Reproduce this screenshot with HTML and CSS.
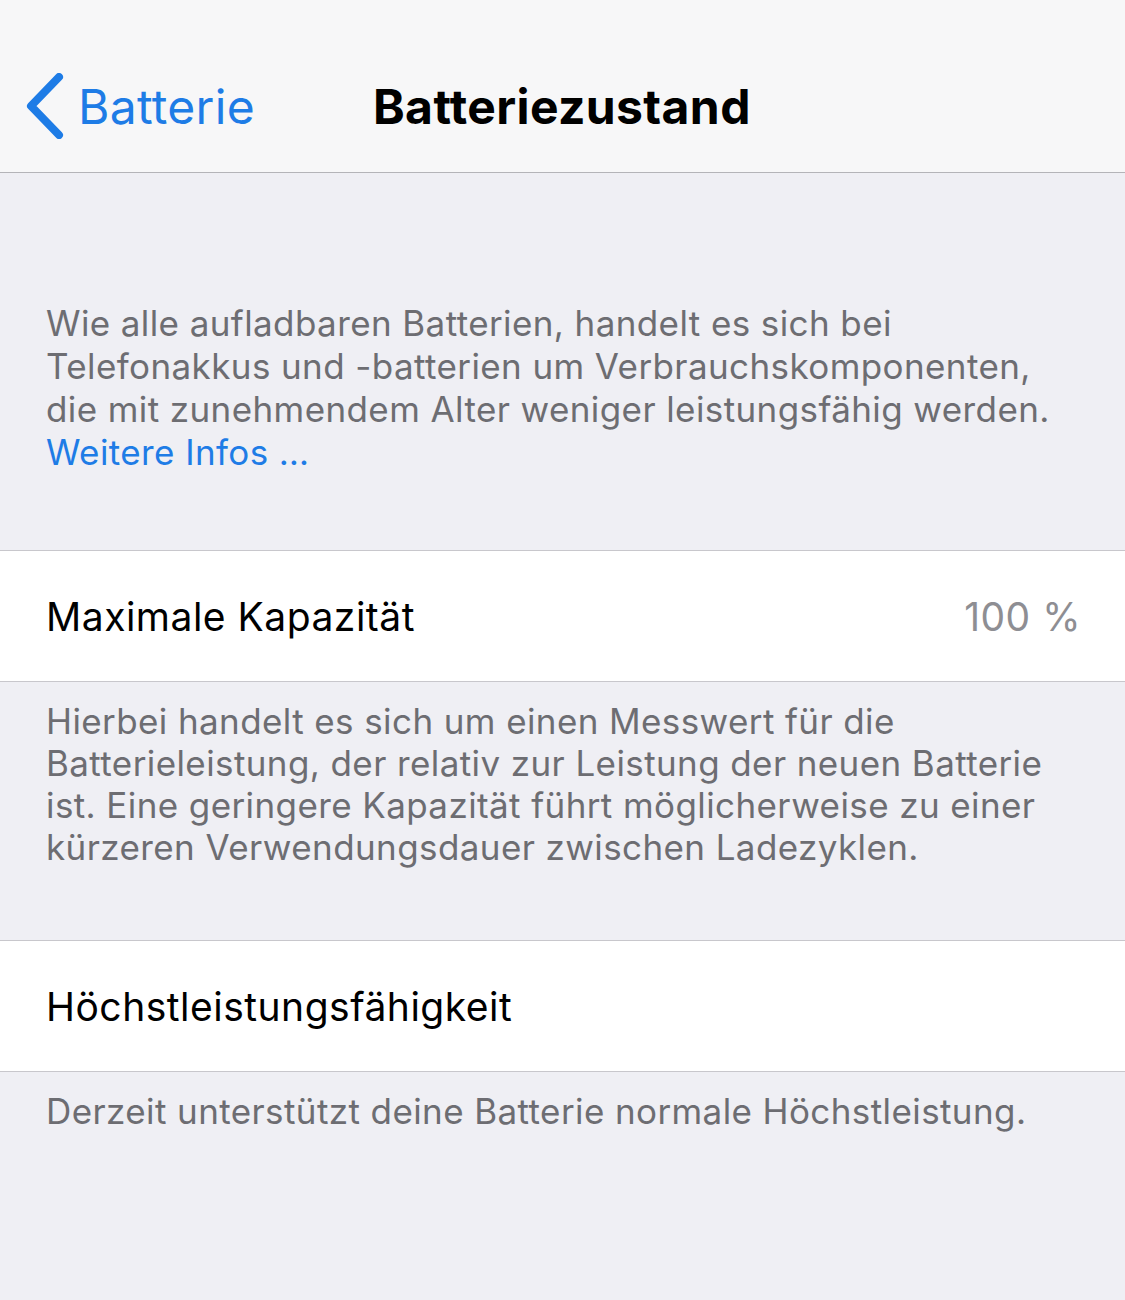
FILE: index.html
```html
<!DOCTYPE html>
<html lang="de">
<head>
    <meta charset="UTF-8">
    <meta name="viewport" content="width=device-width, initial-scale=1.0">
    <title>Batteriezustand</title>
    <link rel="stylesheet" href="styles.css">
</head>
<body>
    <div class="navbar">
        <a class="back" href="#">
            <svg class="chevron" width="40" height="66" viewBox="0 0 40 66">
                <path d="M35 4 L7 33 L35 62" fill="none" stroke="currentColor" stroke-width="8" stroke-linecap="round" stroke-linejoin="round"/>
            </svg>
            <span>Batterie</span>
        </a>
        <h1 class="title">Batteriezustand</h1>
    </div>

    <div class="group-header">
        <p>Wie alle aufladbaren Batterien, handelt es sich bei Telefonakkus und -batterien um Verbrauchskomponenten, die mit zunehmendem Alter weniger leistungsfähig werden.<br><a href="#">Weitere Infos …</a></p>
    </div>

    <div class="cell">
        <span class="cell-label">Maximale Kapazität</span>
        <span class="cell-value">100 %</span>
    </div>
    <div class="group-footer">
        <p>Hierbei handelt es sich um einen Messwert für die Batterieleistung, der relativ zur Leistung der neuen Batterie ist. Eine geringere Kapazität führt möglicherweise zu einer kürzeren Verwendungsdauer zwischen Ladezyklen.</p>
    </div>

    <div class="cell">
        <span class="cell-label">Höchstleistungsfähigkeit</span>
    </div>
    <div class="group-footer">
        <p>Derzeit unterstützt deine Batterie normale Höchstleistung.</p>
    </div>
</body>
</html>
```

FILE: styles.css
```css
body {
    margin: 0;
    background: #efeff4;
    font-family: Inter, "Noto Sans", sans-serif;
    height: 1300px;
    overflow: hidden;
}
.navbar {
    height: 173px;
    background: #f7f7f8;
    border-bottom: 1px solid #b4b4b8;
    display: flex;
    align-items: center;
    padding-top: 40px;
    box-sizing: border-box;
}
.back {
    display: flex;
    align-items: center;
    color: #1e7ce6;
    text-decoration: none;
    font-size: 48px;
    letter-spacing: 0.3px;
    padding-left: 24px;
}
.chevron {
    margin-right: 14px;
}
.title {
    margin: 0 0 0 118px;
    font-size: 48px;
    font-weight: 700;
    color: #000;
    letter-spacing: 0.4px;
}
.group-header,
.group-footer {
    color: #6d6d72;
    font-size: 35px;
    letter-spacing: 0.4px;
    padding: 0 54px 0 46px;
}
.group-header p,
.group-footer p {
    margin: 0;
}
.group-header {
    padding-top: 129px;
    padding-bottom: 76px;
    line-height: 43px;
}
.group-header a {
    color: #1e7ce6;
    text-decoration: none;
}
.group-footer {
    padding-top: 18px;
    padding-bottom: 72px;
    line-height: 42px;
}
.cell {
    background: #fff;
    border-top: 1px solid #c8c7cc;
    border-bottom: 1px solid #c8c7cc;
    height: 130px;
    display: flex;
    align-items: center;
    justify-content: space-between;
    padding: 0 44px 0 46px;
    font-size: 39px;
    letter-spacing: 0.5px;
}
.cell-label {
    color: #000;
}
.cell-value {
    color: #8e8e93;
}
```
